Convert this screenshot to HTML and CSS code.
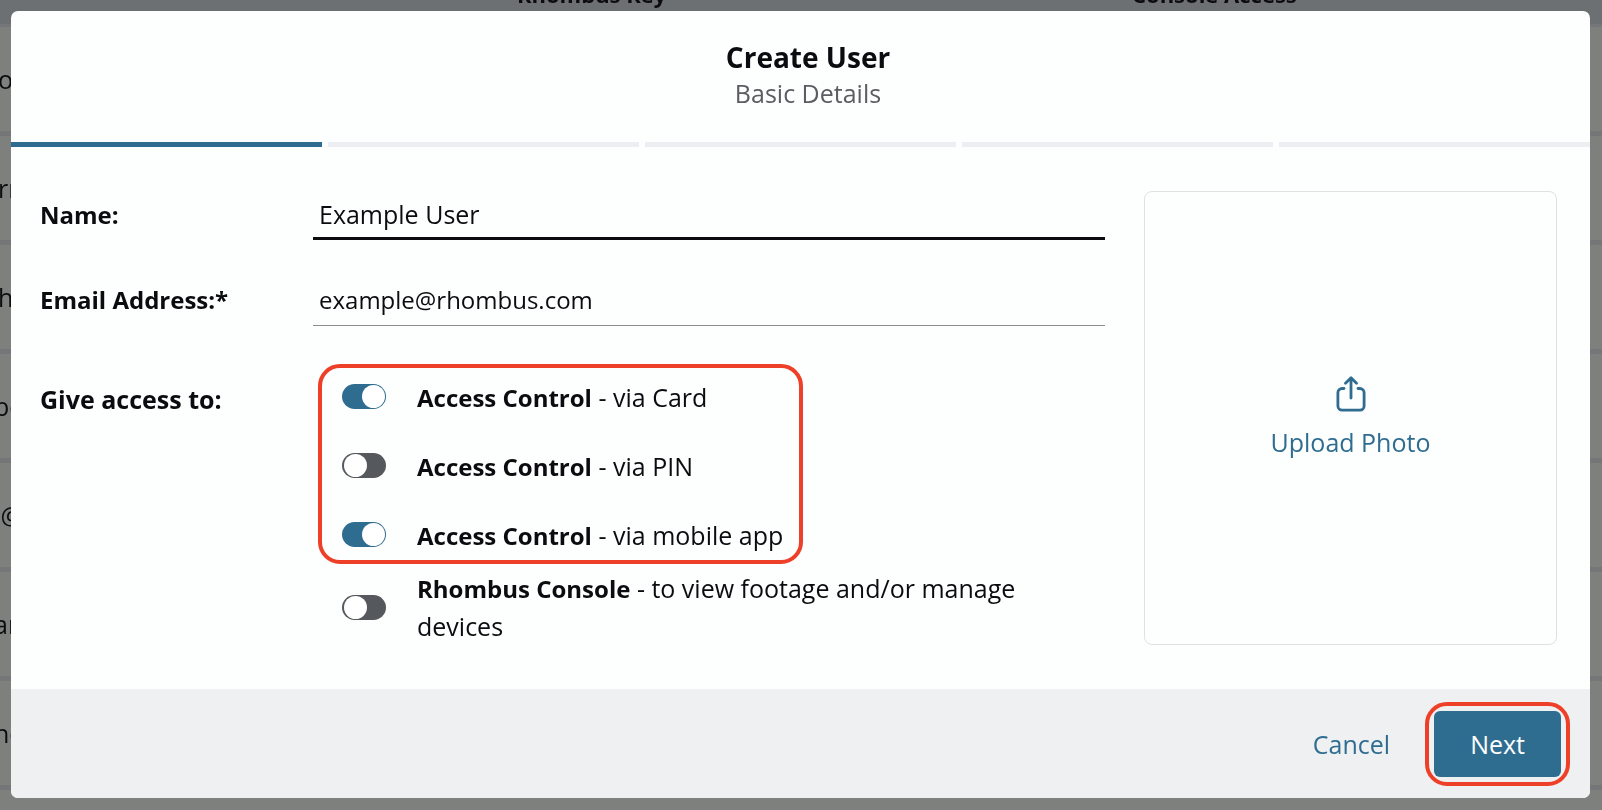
FILE: index.html
```html
<!DOCTYPE html>
<html lang="en">
<head>
<meta charset="utf-8">
<meta name="viewport" content="width=device-width, initial-scale=1">
<title>Create User</title>
<link rel="stylesheet" href="styles.css">
</head>
<body>
<div class="page" aria-hidden="true">
  <table class="users">
    <thead>
      <tr><th class="col-email"></th><th class="col-key">Rhombus Key</th><th>Console Access</th></tr>
    </thead>
    <tbody>
      <tr><td>o</td><td></td><td></td></tr>
      <tr><td>rn</td><td></td><td></td></tr>
      <tr><td>h</td><td></td><td></td></tr>
      <tr><td class="scrolled">be</td><td></td><td></td></tr>
      <tr><td class="scrolled">.@</td><td></td><td></td></tr>
      <tr><td class="scrolled">ar</td><td></td><td></td></tr>
      <tr><td class="scrolled">ne</td><td></td><td></td></tr>
      <tr><td></td><td></td><td></td></tr>
    </tbody>
  </table>
</div>

<div class="overlay">
  <form class="modal" role="dialog" aria-labelledby="modal-title">
    <header class="modal-header">
      <h1 class="modal-title" id="modal-title">Create User</h1>
      <p class="modal-subtitle">Basic Details</p>
    </header>

    <div class="steps">
      <span class="step step-active"></span>
      <span class="step"></span>
      <span class="step"></span>
      <span class="step"></span>
      <span class="step"></span>
    </div>

    <div class="modal-body">
      <div class="fields">
        <div class="field">
          <label class="field-label" for="name">Name:</label>
          <input class="field-input field-input-active" id="name" type="text" value="Example User">
        </div>
        <div class="field">
          <label class="field-label" for="email">Email Address:*</label>
          <input class="field-input" id="email" type="email" value="example@rhombus.com">
        </div>
        <div class="access" role="group" aria-labelledby="access-label">
          <span class="access-label" id="access-label">Give access to:</span>
          <div class="access-list">
            <div class="access-group">
              <label class="access-row">
                <input class="toggle" type="checkbox" role="switch" checked>
                <span class="access-text"><strong>Access Control</strong> - via Card</span>
              </label>
              <label class="access-row">
                <input class="toggle" type="checkbox" role="switch">
                <span class="access-text"><strong>Access Control</strong> - via PIN</span>
              </label>
              <label class="access-row">
                <input class="toggle" type="checkbox" role="switch" checked>
                <span class="access-text"><strong>Access Control</strong> - via mobile app</span>
              </label>
            </div>
            <label class="access-row">
              <input class="toggle" type="checkbox" role="switch">
              <span class="access-text"><strong>Rhombus Console</strong> - to view footage and/or manage devices</span>
            </label>
          </div>
        </div>
      </div>

      <button class="upload" type="button">
        <svg class="upload-icon" viewBox="0 0 30 36" fill="none" stroke="currentColor" stroke-width="2.8" stroke-linecap="round" stroke-linejoin="round" aria-hidden="true">
          <path d="M8 12.5H6.1A4.2 4.2 0 0 0 1.9 16.7V30A4.2 4.2 0 0 0 6.1 34.2H23.9A4.2 4.2 0 0 0 28.1 30V16.7A4.2 4.2 0 0 0 23.9 12.5H22"/>
          <path d="M15 22V2M9.5 7.2L15 1.7L20.5 7.2"/>
        </svg>
        <span>Upload Photo</span>
      </button>
    </div>

    <footer class="modal-footer">
      <button class="button" type="button">Cancel</button>
      <button class="button button-primary" type="submit">Next</button>
    </footer>
  </form>
</div>
</body>
</html>
```
FILE: styles.css
```css
*,
*::before {
  box-sizing: border-box;
}

body {
  margin: 0;
  background: #7e807e;
  color: #0c0c10;
  font-family: "Open Sans", "Noto Sans", sans-serif;
  font-size: 24px;
}

button,
input {
  font-family: inherit;
}

/* Users table, dimmed behind the dialog */

.page {
  position: fixed;
  inset: 0;
  overflow: hidden;
}

.users {
  width: 100%;
  margin-top: -41px;
  border-collapse: separate;
  border-spacing: 0;
  table-layout: fixed;
}

.users th {
  height: 68px;
  padding: 0 0 14px;
  border-bottom: 3px solid #747779;
  background: #6c7072;
  font-size: 22px;
  line-height: 32px;
  text-align: left;
  vertical-align: bottom;
}

.col-email {
  width: 517px;
}

.col-key {
  width: 615px;
}

.users td {
  height: 109px;
  padding: 0;
  border-bottom: 5px solid #757678;
  font-size: 25px;
  line-height: 32px;
  text-indent: -2px;
}

.users .scrolled {
  text-indent: -6px;
}

/* Dialog */

.overlay {
  position: fixed;
  inset: 0;
  padding: 11px 12px 12px 11px;
}

.modal {
  display: flex;
  flex-direction: column;
  height: 100%;
  overflow: hidden;
  border-radius: 7px;
  background: #fdfefe;
}

.modal-header {
  padding: 28px 0 31px 15px;
  text-align: center;
}

.modal-title {
  margin: 0;
  font-size: 28px;
  font-weight: 700;
  line-height: 36px;
}

.modal-subtitle {
  margin: 0;
  color: #5b5d62;
  font-size: 25px;
  line-height: 36px;
}

.steps {
  display: flex;
  gap: 6px;
}

.step {
  flex: 1;
  height: 5px;
  background: #edeef1;
}

.step-active {
  background: #2f6d90;
}

.modal-body {
  display: flex;
  flex: 1;
  gap: 39px;
  padding: 44px 33px 44px 29px;
}

.fields {
  flex: 1;
}

.field {
  display: flex;
  height: 50px;
  margin-bottom: 35px;
}

.field-label,
.access-label {
  flex: none;
  width: 273px;
  font-weight: 700;
}

.field-label {
  line-height: 47px;
}

.field-input {
  flex: 1;
  min-width: 0;
  height: 50px;
  padding: 0 0 3px 6px;
  border: 0;
  border-bottom: 1px solid #8c8e92;
  outline: 0;
  background: transparent;
  color: inherit;
  font-size: 24px;
}

.field-input-active {
  height: 49px;
  padding-bottom: 0;
  border-bottom: 3px solid #0c0c10;
  font-size: 25px;
}

.access {
  display: flex;
  margin-top: 36px;
}

.access-label {
  padding-top: 18px;
  font-size: 25px;
  line-height: 38px;
}

.access-list {
  flex: 1;
}

.access-group {
  position: relative;
}

/* Callout ring around the access control options */
.access-group::before {
  content: "";
  position: absolute;
  top: 2px;
  bottom: 5px;
  left: 5px;
  width: 485px;
  border: 4px solid #ee4028;
  border-radius: 22px;
  pointer-events: none;
}

.access-row {
  display: flex;
  align-items: center;
  gap: 31px;
  min-height: 69px;
  padding-right: 40px;
  padding-left: 29px;
}

.access-text {
  flex: 1;
  font-size: 25px;
  line-height: 38px;
}

.access-text strong {
  font-size: 24px;
  line-height: 36px;
}

.toggle {
  flex: none;
  width: 44px;
  height: 25px;
  margin: 0;
  padding: 1px 2px;
  border-radius: 13px;
  background: #55585d;
  appearance: none;
}

.toggle::before {
  content: "";
  display: block;
  width: 23px;
  height: 23px;
  border-radius: 50%;
  background: #fff;
}

.toggle:checked {
  padding: 1px;
  background: #2f6d90;
}

.toggle:checked::before {
  margin-left: auto;
}

.upload {
  display: flex;
  flex-direction: column;
  align-items: center;
  justify-content: center;
  gap: 12px;
  width: 413px;
  padding: 0;
  border: 1px solid #dfe0e4;
  border-radius: 8px;
  background: transparent;
  color: #2f6d90;
  font-size: 25px;
  line-height: 36px;
}

.upload-icon {
  width: 30px;
  height: 36px;
}

.modal-footer {
  display: flex;
  flex: none;
  align-items: center;
  justify-content: flex-end;
  gap: 8px;
  height: 109px;
  padding-right: 29px;
  background: #eff0f2;
}

.button {
  height: 66px;
  padding: 0 36px;
  border: 0;
  border-radius: 6px;
  background: transparent;
  color: #2f6d90;
  font-size: 25px;
}

.button-primary {
  position: relative;
  background: #2f6d90;
  color: #fff;
}

/* Callout ring around the primary action */
.button-primary::before {
  content: "";
  position: absolute;
  inset: -9px;
  border: 4px solid #ee4028;
  border-radius: 22px;
  pointer-events: none;
}
```
